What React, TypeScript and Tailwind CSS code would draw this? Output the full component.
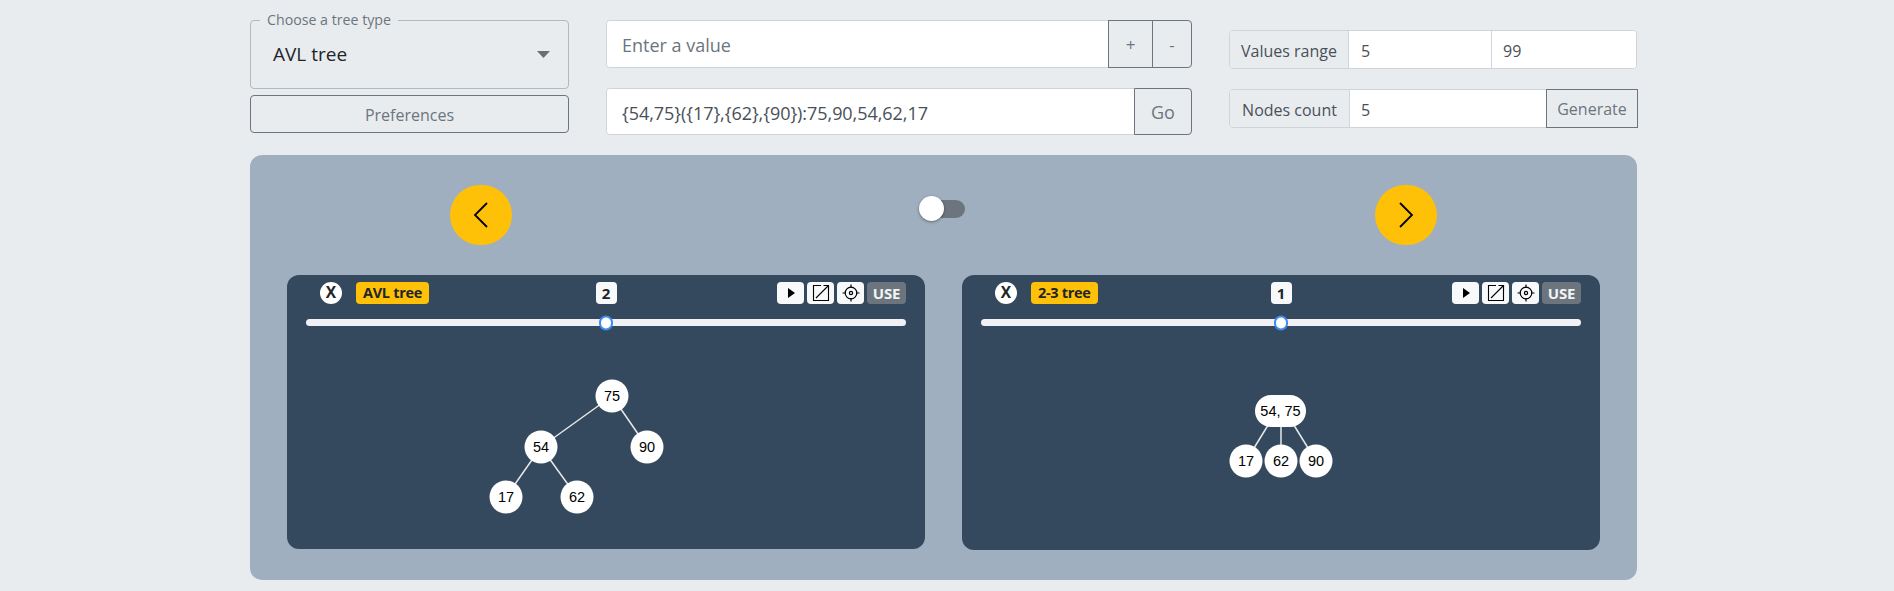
import React from "react";

const font = { fontFamily: '"Open Sans", "Noto Sans", sans-serif' };

function Chevron({ right }: { right?: boolean }) {
  return (
    <svg width="16" height="26" viewBox="0 0 16 26" fill="none" stroke="#000" strokeWidth="1.8">
      <path d={right ? "M2 1 L14 13 L2 25" : "M14 1 L2 13 L14 25"} />
    </svg>
  );
}

function PlayIcon() {
  return (
    <svg width="12" height="12" viewBox="0 0 12 12">
      <path d="M3 1 L10 6 L3 11 Z" fill="#000" />
    </svg>
  );
}

function ResizeIcon() {
  return (
    <svg width="20" height="20" viewBox="0 0 20 20" fill="none" stroke="#000" strokeWidth="1.1">
      <path d="M10 2.5 H2.5 V17.5 H17.5 V2.5 H14" />
      <path d="M5 15 L17.5 2.5 M12.5 2.5 H17.5 V7.5" />
    </svg>
  );
}

function TargetIcon() {
  return (
    <svg width="18" height="18" viewBox="0 0 18 18" fill="none" stroke="#000" strokeWidth="1.2">
      <circle cx="9" cy="9" r="5.8" />
      <circle cx="9" cy="9" r="1.6" />
      <path d="M9 0.5 V4 M9 14 V17.5 M0.5 9 H4 M14 9 H17.5" />
    </svg>
  );
}

function Node({ x, y, label }: { x: number; y: number; label: string }) {
  return (
    <g>
      <circle cx={x} cy={y} r="16.5" fill="#fff" />
      <text x={x} y={y + 5} textAnchor="middle" fontSize="14.5" fill="#000" fontFamily='"Liberation Sans", sans-serif'>
        {label}
      </text>
    </g>
  );
}

function Edge({ x1, y1, x2, y2 }: { x1: number; y1: number; x2: number; y2: number }) {
  return <line x1={x1} y1={y1} x2={x2} y2={y2} stroke="#e6e8ea" strokeWidth="1.5" />;
}

function AvlTree() {
  return (
    <svg className="block mt-[4px]" width="638" height="219" viewBox="0 0 638 219">
      <Edge x1={325} y1={66} x2={254} y2={117} />
      <Edge x1={325} y1={66} x2={360} y2={117} />
      <Edge x1={254} y1={117} x2={219} y2={167} />
      <Edge x1={254} y1={117} x2={290} y2={167} />
      <Node x={325} y={66} label="75" />
      <Node x={254} y={117} label="54" />
      <Node x={360} y={117} label="90" />
      <Node x={219} y={167} label="17" />
      <Node x={290} y={167} label="62" />
    </svg>
  );
}

function TwoThreeTree() {
  return (
    <svg className="block mt-[4px]" width="638" height="220" viewBox="0 0 638 220">
      <Edge x1={308} y1={92} x2={284} y2={131} />
      <Edge x1={319} y1={92} x2={319} y2={131} />
      <Edge x1={330} y1={92} x2={354} y2={131} />
      <rect x="293" y="65" width="51" height="32" rx="16" fill="#fff" />
      <text x="318.5" y="86" textAnchor="middle" fontSize="14.5" fill="#000" fontFamily='"Liberation Sans", sans-serif'>
        54, 75
      </text>
      <Node x={284} y={131} label="17" />
      <Node x={319} y={131} label="62" />
      <Node x={354} y={131} label="90" />
    </svg>
  );
}

function TreeCard({ name, step, height, children }: { name: string; step: string; height: string; children: React.ReactNode }) {
  return (
    <div className={`${height} rounded-[12px] bg-[#35495e]`}>
      <div className="mx-[19px] pt-[7px]">
        <div className="grid grid-cols-3 items-center h-[22px]">
          <div className="flex items-center gap-[14px] pl-[14px]">
            <span className="w-[22px] h-[22px] rounded-full bg-white flex items-center justify-center text-[15.5px] font-bold text-[#212529]">X</span>
            <span className="h-[22px] px-[7px] rounded-[4px] bg-[#ffc107] flex items-center text-[14.5px] font-bold text-[#212529] tracking-[-0.3px]">{name}</span>
          </div>
          <div className="flex justify-center">
            <span className="w-[21px] h-[22px] rounded-[4px] bg-[#f8f9fa] flex items-center justify-center text-[15px] font-bold text-[#212529]">{step}</span>
          </div>
          <div className="flex justify-end gap-[3px]">
            <span className="w-[27px] h-[22px] rounded-[4px] bg-[#f8f9fa] flex items-center justify-center"><PlayIcon /></span>
            <span className="w-[27px] h-[22px] rounded-[4px] bg-[#f8f9fa] flex items-center justify-center"><ResizeIcon /></span>
            <span className="w-[27px] h-[22px] rounded-[4px] bg-[#f8f9fa] flex items-center justify-center"><TargetIcon /></span>
            <span className="w-[39px] h-[22px] rounded-[4px] bg-[#6c757d] flex items-center justify-center text-[15px] font-bold text-[#f1f3f5] tracking-[-0.2px]">USE</span>
          </div>
        </div>
        <div className="relative mt-[15px] h-[7px] rounded-full bg-[#f1f0f4]">
          <span className="absolute left-1/2 top-1/2 -translate-x-1/2 -translate-y-1/2 w-[14px] h-[15px] rounded-full bg-white border-2 border-[#3b8bf0]" />
        </div>
      </div>
      {children}
    </div>
  );
}

const outlineBtn = "border border-[#6c757d] text-[#6c757d] bg-[#e9ecef] flex items-center justify-center";
const addon = "bg-[#e9ecef] text-[#495057] text-[16px] flex items-center justify-center border-r border-[#ced4da] pt-[2px]";
const inputCls = "min-w-0 bg-white text-[#495057] outline-none";

export default function App() {
  return (
    <div className="min-h-[591px] bg-[#e9ecef] pt-[20px] pl-[250px]" style={font}>
      <div className="w-[1387px]">
        <div className="flex items-start">
          <div className="w-[319px] flex flex-col gap-[6px]">
            <fieldset className="-mt-[9px] h-[78px] rounded-[4px] border border-[#b4b8bc] pl-[9px] pr-[18px] relative">
              <legend className="px-[7px] text-[14.2px] leading-[18px] text-[#6c757d]">Choose a tree type</legend>
              <div className="flex items-center justify-between mt-[12px] h-[26px]">
                <span className="pl-[13px] text-[19px] text-[#212529]">AVL tree</span>
                <svg width="13" height="7" viewBox="0 0 13 7"><path d="M0 0 H13 L6.5 7 Z" fill="#6f6f6f" /></svg>
              </div>
            </fieldset>
            <button className={`${outlineBtn} h-[38px] rounded-[4px] text-[16px] pt-[2px]`}>Preferences</button>
          </div>

          <div className="ml-[37px] w-[586px] flex flex-col gap-[20px]">
            <div className="flex h-[48px] rounded-[4px] border border-[#ced4da] bg-white">
              <input className={`${inputCls} flex-1 pl-[15px] pt-[2px] rounded-l-[4px] text-[18px] placeholder:text-[#6c757d]`} placeholder="Enter a value" readOnly />
              <button className={`${outlineBtn} -my-[1px] w-[45px] text-[17px] pt-[2px]`}>+</button>
              <button className={`${outlineBtn} -my-[1px] -mr-[1px] -ml-[1px] w-[40px] rounded-r-[4px] text-[17px] pt-[2px]`}>-</button>
            </div>
            <div className="flex h-[47px] rounded-[4px] border border-[#ced4da] bg-white">
              <input className={`${inputCls} flex-1 pl-[15px] pt-[3px] rounded-l-[4px] text-[18px] tracking-[-0.05px]`} value="{54,75}({17},{62},{90}):75,90,54,62,17" readOnly />
              <button className={`${outlineBtn} -my-[1px] -mr-[1px] w-[58px] rounded-r-[4px] text-[18px] pt-[2px]`}>Go</button>
            </div>
          </div>

          <div className="ml-[37px] w-[408px] pt-[10px] flex flex-col gap-[20px]">
            <div className="flex h-[39px] rounded-[4px] border border-[#ced4da] overflow-hidden bg-white">
              <span className={`${addon} w-[119px]`}>Values range</span>
              <input className={`${inputCls} w-[143px] pl-[12px] pt-[2px] text-[16px] border-r border-[#ced4da]`} value="5" readOnly />
              <input className={`${inputCls} flex-1 pl-[11px] pt-[2px] text-[16px]`} value="99" readOnly />
            </div>
            <div className="flex h-[39px] rounded-[4px] border border-[#ced4da] bg-white">
              <span className={`${addon} w-[120px] rounded-l-[4px]`}>Nodes count</span>
              <input className={`${inputCls} flex-1 pl-[11px] pt-[2px] text-[16px]`} value="5" readOnly />
              <button className={`${outlineBtn} -my-[1px] -mr-[2px] w-[92px] text-[16px] pt-[1px]`}>Generate</button>
            </div>
          </div>
        </div>

        <div className="mt-[20px] h-[425px] rounded-[12px] bg-[#9fafbf] pt-[30px]">
          <div className="flex items-start justify-between pl-[200px] pr-[200px]">
            <button className="w-[62px] h-[60px] rounded-full bg-[#ffc107] flex items-center justify-center pr-[1px]"><Chevron /></button>
            <div className="relative mt-[15px] -ml-[2px] w-[44px] h-[18px] rounded-full bg-[#6c757d]">
              <span className="absolute -left-[2px] -top-[4px] w-[25px] h-[25px] rounded-full bg-white shadow-[0_1px_3px_rgba(0,0,0,0.4)]" />
            </div>
            <button className="w-[62px] h-[60px] rounded-full bg-[#ffc107] flex items-center justify-center"><Chevron right /></button>
          </div>
          <div className="mt-[30px] ml-[37px] grid grid-cols-[638px_638px] gap-[37px] items-start">
            <TreeCard name="AVL tree" step="2" height="h-[274px]"><AvlTree /></TreeCard>
            <TreeCard name="2-3 tree" step="1" height="h-[275px]"><TwoThreeTree /></TreeCard>
          </div>
        </div>
      </div>
    </div>
  );
}
